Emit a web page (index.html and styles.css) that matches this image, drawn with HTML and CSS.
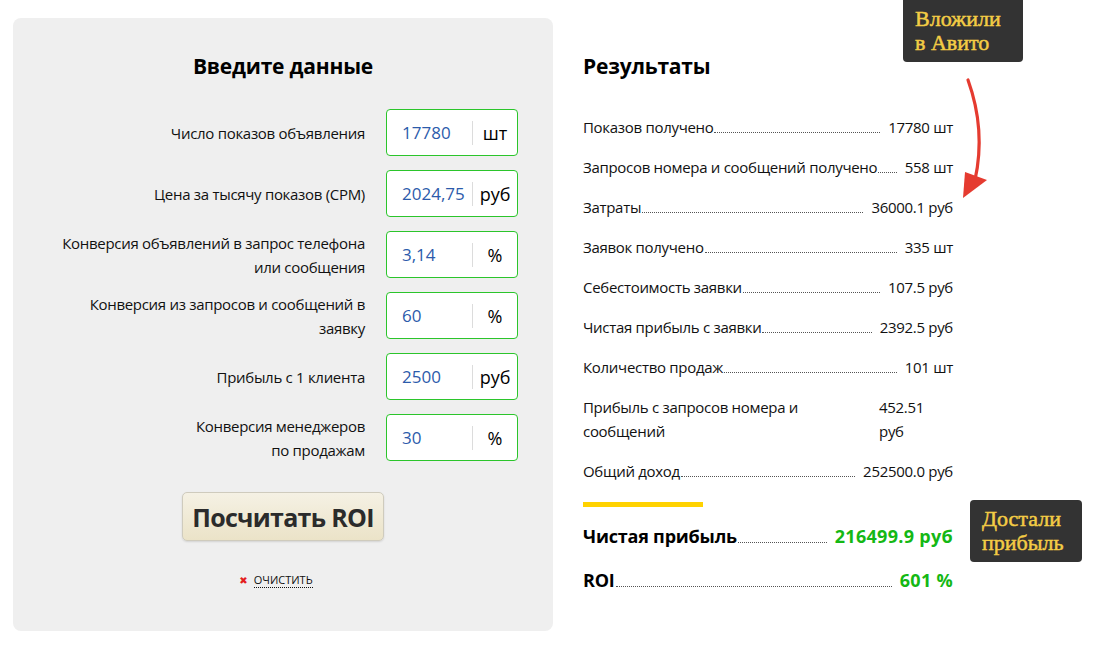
FILE: index.html
```html
<!DOCTYPE html>
<html lang="ru">
<head>
<meta charset="utf-8">
<title>ROI Авито</title>
<link rel="stylesheet" href="styles.css">
</head>
<body>
<div class="page">
  <section class="form-panel">
    <h2 class="title">Введите данные</h2>
    <div class="rows">
      <div class="row">
        <div class="label">Число показов объявления</div>
        <div class="field"><span class="val">17780</span><span class="unit">шт</span></div>
      </div>
      <div class="row">
        <div class="label">Цена за тысячу показов (CPM)</div>
        <div class="field"><span class="val">2024,75</span><span class="unit">руб</span></div>
      </div>
      <div class="row">
        <div class="label">Конверсия объявлений в запрос телефона<br>или сообщения</div>
        <div class="field"><span class="val">3,14</span><span class="unit">%</span></div>
      </div>
      <div class="row">
        <div class="label">Конверсия из запросов и сообщений в<br>заявку</div>
        <div class="field"><span class="val">60</span><span class="unit">%</span></div>
      </div>
      <div class="row">
        <div class="label">Прибыль с 1 клиента</div>
        <div class="field"><span class="val">2500</span><span class="unit">руб</span></div>
      </div>
      <div class="row">
        <div class="label">Конверсия менеджеров<br>по продажам</div>
        <div class="field"><span class="val">30</span><span class="unit">%</span></div>
      </div>
    </div>
    <button class="calc">Посчитать ROI</button>
    <div class="clear"><span class="x">✖</span><span class="clear-text">очистить</span></div>
  </section>

  <section class="results">
    <h2 class="title res-title">Результаты</h2>
    <div class="res-list">
      <div class="res"><span class="rl">Показов получено</span><span class="dots"></span><span class="rv">17780 шт</span></div>
      <div class="res"><span class="rl">Запросов номера и сообщений получено</span><span class="dots"></span><span class="rv">558 шт</span></div>
      <div class="res"><span class="rl">Затраты</span><span class="dots"></span><span class="rv">36000.1 руб</span></div>
      <div class="res"><span class="rl">Заявок получено</span><span class="dots"></span><span class="rv">335 шт</span></div>
      <div class="res"><span class="rl">Себестоимость заявки</span><span class="dots"></span><span class="rv">107.5 руб</span></div>
      <div class="res"><span class="rl">Чистая прибыль с заявки</span><span class="dots"></span><span class="rv">2392.5 руб</span></div>
      <div class="res"><span class="rl">Количество продаж</span><span class="dots"></span><span class="rv">101 шт</span></div>
      <div class="res res-wrap"><span class="rl rl-wide">Прибыль с запросов номера и сообщений</span><span class="rv rv-narrow">452.51 руб</span></div>
      <div class="res"><span class="rl">Общий доход</span><span class="dots"></span><span class="rv">252500.0 руб</span></div>
    </div>
    <div class="bar"></div>
    <div class="res big"><span class="rl">Чистая прибыль</span><span class="dots"></span><span class="rv green">216499.9 руб</span></div>
    <div class="res big"><span class="rl">ROI</span><span class="dots"></span><span class="rv green">601 %</span></div>
  </section>
</div>

<div class="note note-top">Вложили<br>в Авито</div>
<div class="note note-bottom">Достали<br>прибыль</div>
<svg class="arrow" width="40" height="130" viewBox="950 75 40 130">
  <path d="M968 80 Q986 130 975 180" fill="none" stroke="#e53b30" stroke-width="3.2" stroke-linecap="round"/>
  <polygon points="963,198 965,172 987,180" fill="#e53b30"/>
</svg>
</body>
</html>
```
FILE: styles.css
```css
* { box-sizing: border-box; }
body {
  margin: 0;
  background: #fff;
  font-family: "Open Sans", "Noto Sans", sans-serif;
  color: #111;
}
.page {
  display: flex;
  padding: 18px 0 0 13px;
  align-items: flex-start;
}
.form-panel {
  width: 540px;
  height: 613px;
  background: #efefef;
  border-radius: 8px;
  padding-top: 34px;
  display: flex;
  flex-direction: column;
  align-items: center;
}
.title {
  margin: 0;
  font-size: 21px;
  line-height: 28px;
  font-weight: 700;
  color: #000;
  letter-spacing: -0.2px;
}
.rows {
  margin-top: 29px;
  display: flex;
  flex-direction: column;
  gap: 14px;
  width: 100%;
}
.row {
  display: flex;
  align-items: center;
  height: 47px;
}
.label {
  width: 352px;
  text-align: right;
  font-size: 15px;
  line-height: 24px;
  color: #111;
  letter-spacing: -0.3px;
}
.field {
  margin-left: 21px;
  width: 132px;
  height: 47px;
  background: #fff;
  border: 1px solid #2bc52b;
  border-radius: 4px;
  display: flex;
  align-items: center;
}
.val {
  width: 86px;
  padding-left: 15px;
  font-size: 17px;
  color: #2c5bab;
  border-right: 1px solid #dcdcdc;
  line-height: 24px;
}
.unit {
  flex: 1;
  text-align: center;
  font-size: 18px;
  color: #000;
}
.calc {
  margin-top: 31px;
  width: 202px;
  height: 49px;
  border: 1px solid #cfcbbd;
  border-radius: 5px;
  background: linear-gradient(#f5f1e4, #ebe3c8);
  box-shadow: 0 1px 2px rgba(0,0,0,0.12);
  font-family: "Open Sans", sans-serif;
  font-weight: 700;
  font-size: 25px;
  color: #2b2b2b;
  letter-spacing: -0.7px;
  padding: 0;
}
.clear {
  margin-top: 31px;
  display: flex;
  align-items: center;
  gap: 6px;
  margin-left: -14px;
}
.x {
  color: #e41e1e;
  font-size: 10px;
  font-family: "DejaVu Sans", sans-serif;
}
.clear-text {
  text-transform: uppercase;
  font-size: 11px;
  color: #111;
  border-bottom: 1px dotted #111;
  line-height: 15px;
}
.results {
  margin-left: 30px;
  width: 370px;
  padding-top: 34px;
}
.res-list {
  margin-top: 35px;
  display: flex;
  flex-direction: column;
  gap: 16px;
}
.res {
  display: flex;
  align-items: baseline;
  font-size: 15px;
  line-height: 24px;
  letter-spacing: -0.3px;
}
.rl { white-space: nowrap; }
.dots {
  flex: 1;
  border-bottom: 1px dotted #555;
  margin: 0 8px 0 1px;
}
.rv { white-space: nowrap; }
.res-wrap { align-items: flex-start; }
.rl-wide { width: 296px; white-space: normal; padding-right: 60px; }
.rv-narrow { width: 60px; white-space: normal; }
.bar {
  margin-top: 19px;
  width: 120px;
  height: 5px;
  background: #ffd200;
}
.big {
  font-size: 18px;
  font-weight: 700;
  letter-spacing: -0.2px;
  color: #000;
}
.bar + .big { margin-top: 17px; }
.big + .big { margin-top: 20px; }
.green { color: #14b814; letter-spacing: 0.3px; }
.note {
  position: absolute;
  background: #333;
  color: #f3cc45;
  font-family: "Liberation Serif", "DejaVu Serif", serif;
  font-size: 22px;
  line-height: 24px;
  -webkit-text-stroke: 0.5px #f3cc45;
  border-radius: 4px;
  padding: 7px 12px;
}
.note-top { left: 903px; top: 0; width: 120px; height: 62px; border-radius: 0 0 4px 4px; }
.note-bottom { left: 970px; top: 500px; width: 112px; height: 62px; }
.arrow {
  position: absolute;
  left: 950px;
  top: 75px;
}
```
